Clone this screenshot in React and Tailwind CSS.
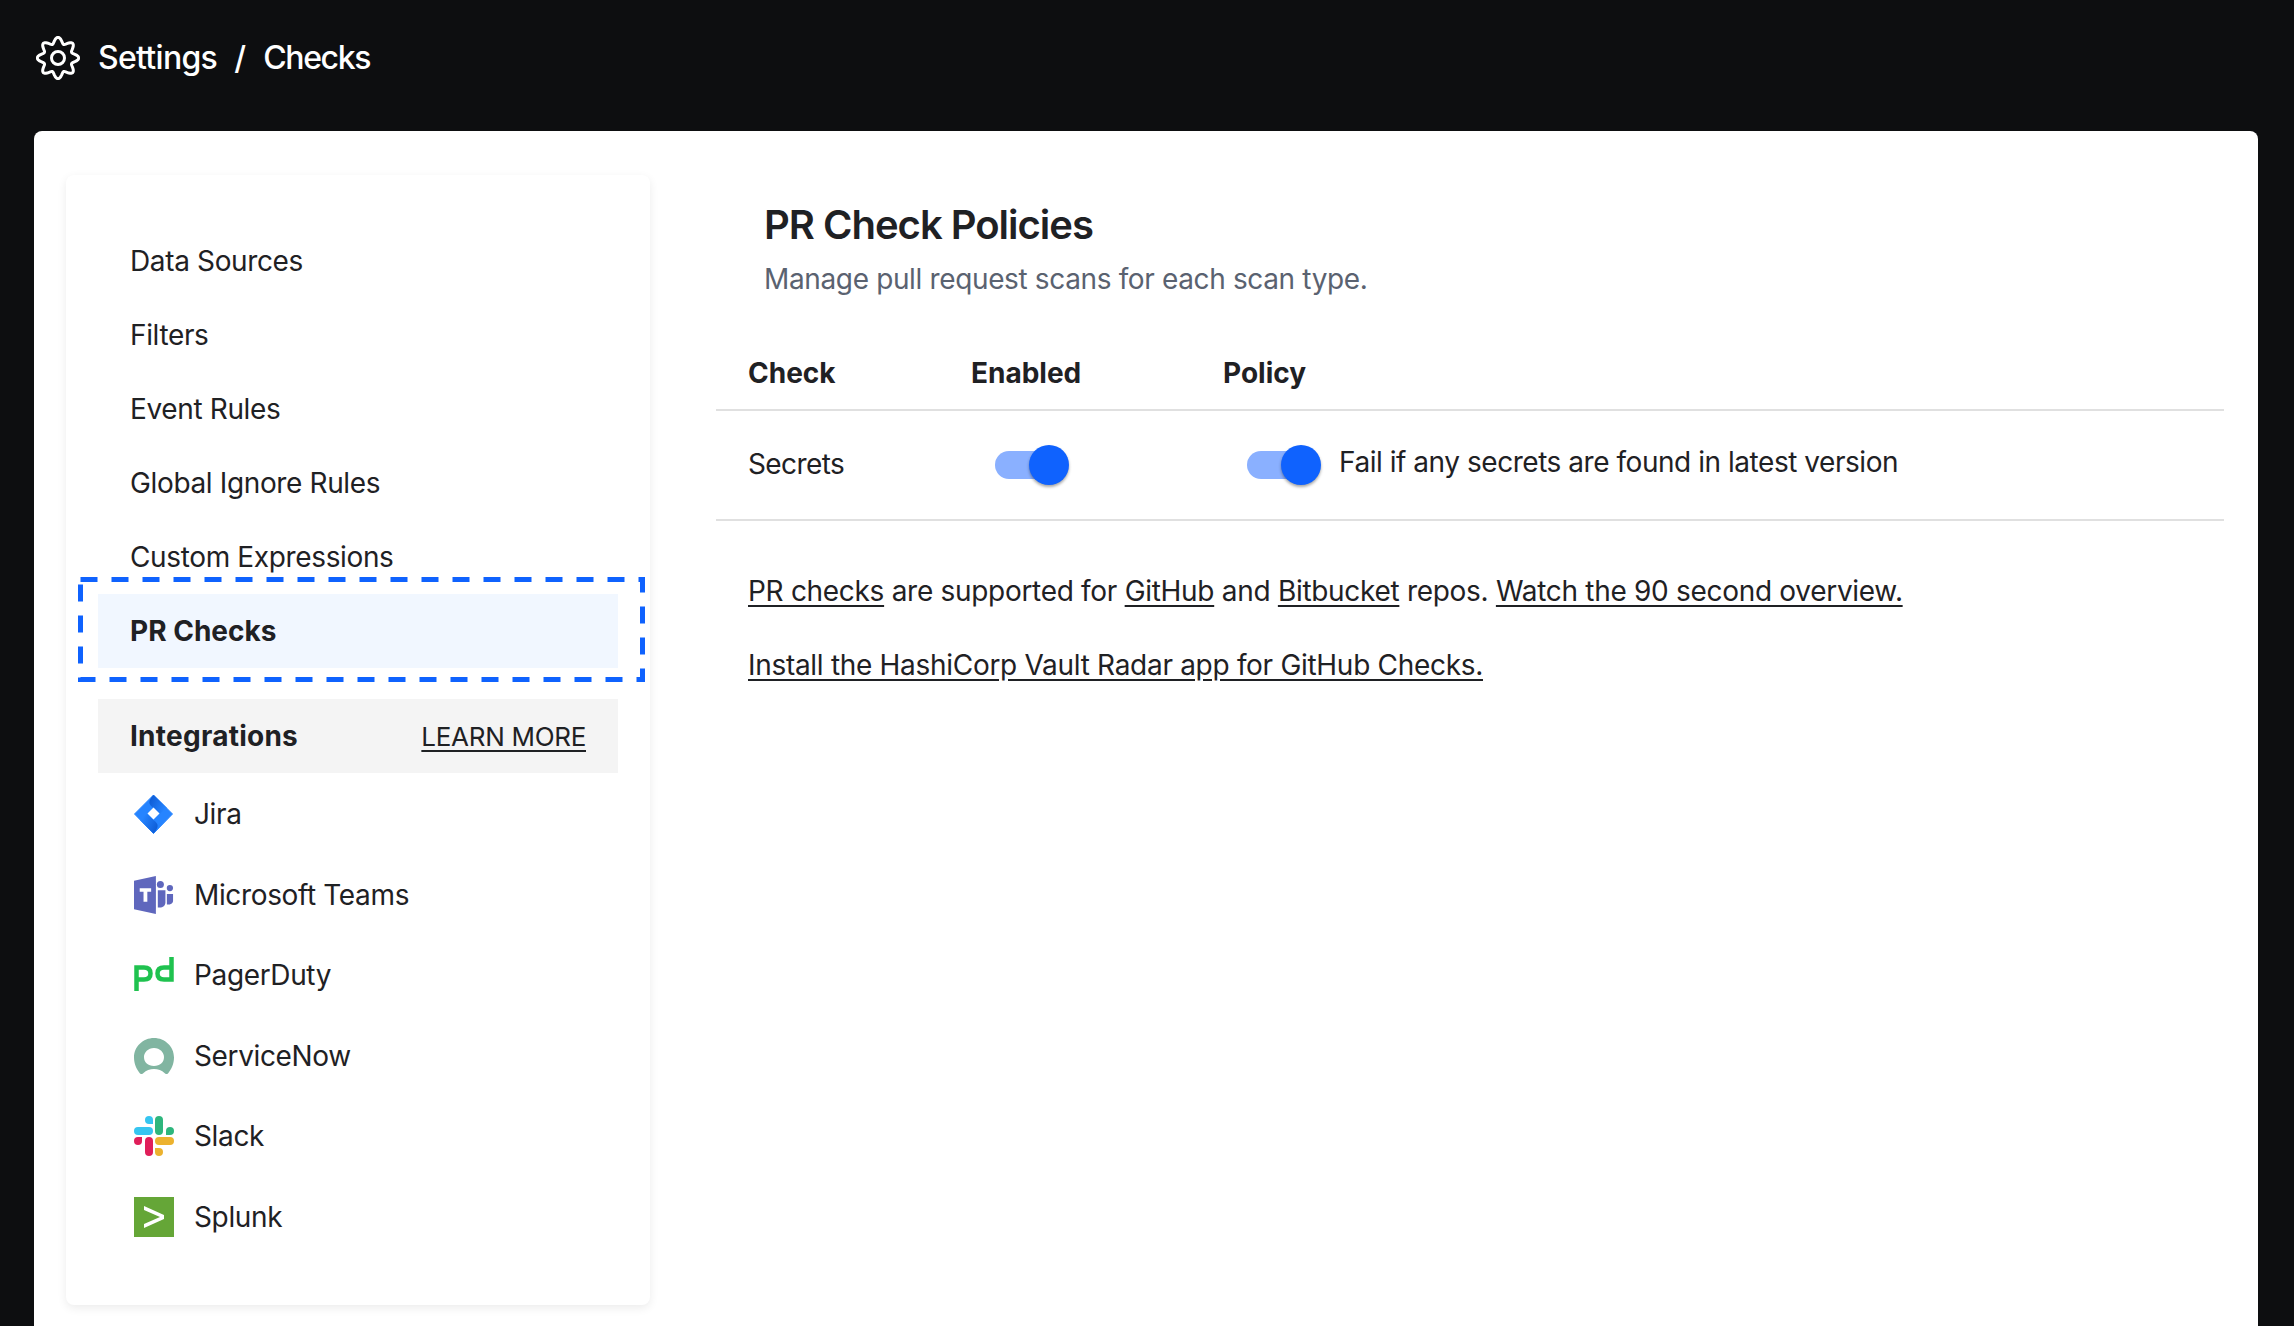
const navItems = ['Data Sources', 'Filters', 'Event Rules', 'Global Ignore Rules', 'Custom Expressions'];

// wavy outline for the settings gear, eight rounded teeth
const gearPath = Array.from({ length: 160 }, (_, i) => {
  const a = (i / 160) * Math.PI * 2;
  const r = 17.7 + 3 * Math.cos(8 * a);
  return `${(22 + r * Math.sin(a)).toFixed(2)} ${(22 - r * Math.cos(a)).toFixed(2)}`;
}).join(' L');

function GearIcon() {
  return (
    <svg width="44" height="44" viewBox="0 0 44 44" fill="none" stroke="#fff" strokeWidth="3" strokeLinejoin="round">
      <path d={`M${gearPath}Z`} />
      <circle cx="22" cy="22" r="6.500" />
    </svg>
  );
}

function JiraIcon() {
  return (
    <svg width="40" height="40" viewBox="0 0 40 40">
      <defs>
        <linearGradient id="jira-top" x1="0" y1="0" x2="1" y2="0.500">
          <stop offset="0" stopColor="#0b57d0" />
          <stop offset="1" stopColor="#2684ff" />
        </linearGradient>
        <linearGradient id="jira-bottom" x1="1" y1="1" x2="0" y2="0.500">
          <stop offset="0" stopColor="#0b57d0" />
          <stop offset="1" stopColor="#2684ff" />
        </linearGradient>
      </defs>
      <path d="M19.500 1 38.500 20 19.500 39.500 .5 20Z" fill="#2684ff" stroke="#2684ff" strokeWidth="1" strokeLinejoin="round" />
      <path d="M19.500 1 C14 7 14 10 19.500 14 L26 20 33 14Z" fill="url(#jira-top)" />
      <path d="M19.500 39.500 C25 33 25 30 19.500 26 L13 20 6 26Z" fill="url(#jira-bottom)" />
      <path d="M19.500 13.500 25.500 19.500 19.500 25.500 13.500 19.500Z" fill="#fff" />
    </svg>
  );
}

function TeamsIcon() {
  return (
    <svg width="42" height="40" viewBox="0 0 42 40" fill="#5f67bd">
      <path d="M0 5 23 0V40L0 35Z" />
      <circle cx="27.700" cy="9" r="3.700" />
      <circle cx="37.700" cy="12.700" r="3.300" />
      <path d="M25 15H33V28C33 32 29 34 25 33Z" />
      <path d="M34.500 19H41V26C41 29 37.500 30.500 34.500 30Z" />
      <path d="M6 13H18V16.500H14V27H10V16.500H6Z" fill="#fff" />
    </svg>
  );
}

function PagerDutyIcon() {
  return (
    <svg width="40" height="40" viewBox="0 0 40 40" fill="none" stroke="#1fc24f" strokeWidth="4.500">
      <path d="M2.500 36V12.500H10C14.500 12.500 16.500 15 16.500 18.500 16.500 22 14.500 24.500 10 24.500H2.500" />
      <path d="M37.500 2V24.500H30C25.500 24.500 23.500 22 23.500 18.500 23.500 15 25.500 12.500 30 12.500H37.500" />
    </svg>
  );
}

function ServiceNowIcon() {
  return (
    <svg width="40" height="36" viewBox="0 0 40 36">
      <path fillRule="evenodd" fill="#81b5a1" d="M20 0C9 0 0 8.500 0 19.500 0 26 2.500 31 6 35.500 7 36.500 8.500 36 9.500 35 12 32.500 16 31 20 31 24 31 28 32.500 30.500 35 31.500 36 33 36.500 34 35.500 37.500 31 40 26 40 19.500 40 8.500 31 0 20 0ZM20 10C26 10 30 14.500 30 19 30 24.500 26 28 20 28 14 28 10 24.500 10 19 10 14.500 14 10 20 10Z" />
    </svg>
  );
}

function SlackIcon() {
  return (
    <svg width="40" height="40" viewBox="0 0 40 40">
      <path d="M15 0a4 4 0 0 0 0 8h4V4a4 4 0 0 0-4-4Z" fill="#36c5f0" />
      <rect x="0" y="11" width="19" height="8" rx="4" fill="#36c5f0" />
      <rect x="21" y="0" width="8" height="19" rx="4" fill="#2eb67d" />
      <path d="M40 15a4 4 0 0 0-8 0v4h4a4 4 0 0 0 4-4Z" fill="#2eb67d" />
      <path d="M25 40a4 4 0 0 0 0-8h-4v4a4 4 0 0 0 4 4Z" fill="#ecb22e" />
      <rect x="21" y="21" width="19" height="8" rx="4" fill="#ecb22e" />
      <rect x="11" y="21" width="8" height="19" rx="4" fill="#e01e5a" />
      <path d="M0 25a4 4 0 0 0 8 0v-4H4a4 4 0 0 0-4 4Z" fill="#e01e5a" />
    </svg>
  );
}

function SplunkIcon() {
  return (
    <svg width="40" height="40" viewBox="0 0 40 40">
      <rect width="40" height="40" fill="#65a637" />
      <path d="M10 9 30 18V22L10 31V27L26 20 10 13Z" fill="#fff" />
    </svg>
  );
}

const integrations = [
  { name: 'Jira', icon: <JiraIcon /> },
  { name: 'Microsoft Teams', icon: <TeamsIcon /> },
  { name: 'PagerDuty', icon: <PagerDutyIcon /> },
  { name: 'ServiceNow', icon: <ServiceNowIcon /> },
  { name: 'Slack', icon: <SlackIcon /> },
  { name: 'Splunk', icon: <SplunkIcon /> },
];

function Toggle() {
  return (
    <div className="relative h-10 w-[74px] shrink-0">
      <div className="absolute left-0 top-[6px] h-7 w-[68px] rounded-full bg-[#8ab0ff]" />
      <div className="absolute right-0 top-0 h-10 w-10 rounded-full bg-[#0f62fe] shadow-[0_2px_3px_rgba(0,0,0,0.35)]" />
    </div>
  );
}

export default function App() {
  return (
    <div className="flex h-[1326px] flex-col overflow-hidden bg-[#0d0e10] font-['Inter',sans-serif] text-[28px] tracking-[-0.36px] text-[#1f2124]">
      <header className="flex h-[131px] shrink-0 items-start gap-[18px] pl-[36px] pt-[36px]">
        <GearIcon />
        <h1 className="mt-[2px] flex gap-[17px] text-[32px] font-medium leading-[40px] tracking-[-0.7px] text-white">
          <span>Settings</span>
          <span>/</span>
          <span className="ml-[1px] tracking-[-1.4px]">Checks</span>
        </h1>
      </header>

      <main className="ml-[34px] mr-[36px] flex flex-1 gap-[66px] rounded-t-lg bg-white pl-[32px] pr-[34px] pt-[44px]">
        <aside className="h-[1130px] w-[584px] shrink-0 rounded-lg bg-white px-[32px] pt-[49px] shadow-[0_3px_10px_rgba(0,0,0,0.08)]">
          <ul>
            {navItems.map((item) => (
              <li key={item} className="flex h-[74px] items-center px-[32px]">{item}</li>
            ))}
            <li className="relative flex h-[74px] items-center bg-[#f1f7ff] px-[32px] font-bold tracking-normal">
              PR Checks
              <svg className="absolute left-[-20px] top-[-17px]" width="567" height="105" fill="none">
                <rect x="2.500" y="2.500" width="562" height="100" stroke="#0f62fe" strokeWidth="5" strokeDasharray="17 14" />
              </svg>
            </li>
          </ul>

          <div className="mt-[31px] flex h-[74px] items-center justify-between bg-[#f4f4f4] px-[32px]">
            <span className="font-bold tracking-[0.25px]">Integrations</span>
            <a className="text-[26px] tracking-[-0.3px] underline decoration-2 underline-offset-4">LEARN MORE</a>
          </div>
          <ul className="pt-[1px]">
            {integrations.map((item) => (
              <li key={item.name} className="flex h-[80.500px] items-center gap-[20px] pl-[36px]">
                <span className="flex w-[40px] justify-start">{item.icon}</span>
                {item.name}
              </li>
            ))}
          </ul>
        </aside>

        <section className="min-w-0 flex-1 pt-[25px]">
          <div className="pl-[48px]">
            <h2 className="text-[40px] font-semibold leading-[50px] tracking-[-1px]">PR Check Policies</h2>
            <p className="mt-[9px] leading-[40px] text-[#5a6270]">Manage pull request scans for each scan type.</p>
          </div>

          <div className="mt-[54px] flex h-[58px] items-start border-b-2 border-[#e0e0e0] pl-[32px] font-bold leading-[40px] tracking-normal">
            <span className="w-[223px]">Check</span>
            <span className="w-[252px]">Enabled</span>
            <span>Policy</span>
          </div>
          <div className="flex h-[110px] items-center border-b-2 border-[#e0e0e0] pl-[32px]">
            <span className="-mt-[2px] w-[247px] tracking-[-0.6px]">Secrets</span>
            <span className="w-[252px]"><Toggle /></span>
            <div className="flex items-center gap-[18px]">
              <Toggle />
              <span className="-mt-[6px] tracking-[-0.46px]">Fail if any secrets are found in latest version</span>
            </div>
          </div>

          <div className="pl-[32px] pt-[50px] leading-[40px] tracking-[-0.3px]">
            <p>
              <a className="underline underline-offset-4">PR checks</a> are supported for <a className="underline underline-offset-4">GitHub</a> and <a className="underline underline-offset-4">Bitbucket</a> repos. <a className="underline underline-offset-4">Watch the 90 second overview.</a>
            </p>
            <p className="mt-[34px]">
              <a className="underline underline-offset-4">Install the HashiCorp Vault Radar app for GitHub Checks.</a>
            </p>
          </div>
        </section>
      </main>
    </div>
  );
}
